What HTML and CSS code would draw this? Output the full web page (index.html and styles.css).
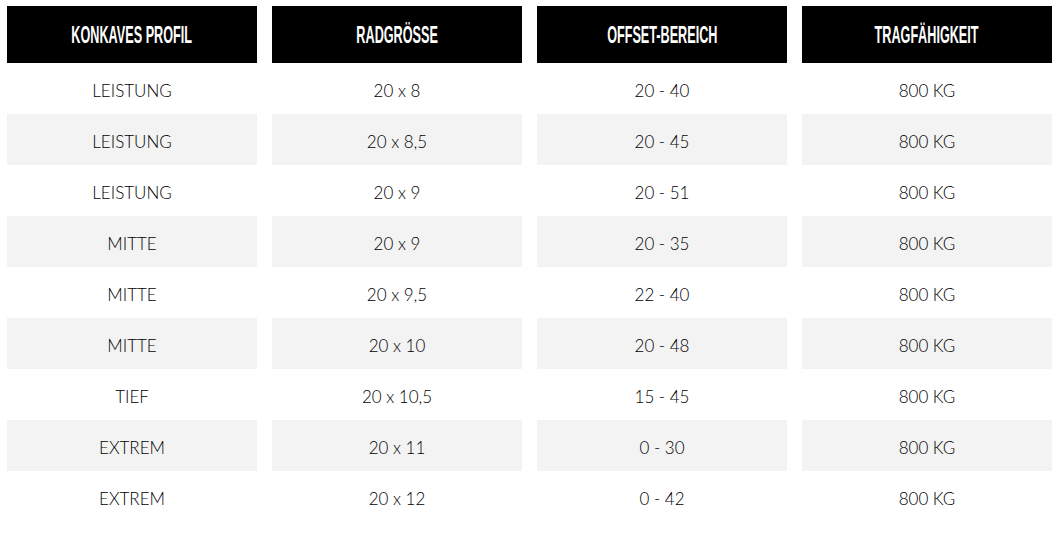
FILE: index.html
```html
<!DOCTYPE html>
<html>
<head>
<meta charset="utf-8">
<link rel="stylesheet" href="styles.css">
</head>
<body>
<div class="table">
  <div class="row head">
    <div class="cell"><span class="ht">KONKAVES PROFIL</span></div>
    <div class="cell"><span class="ht">RADGRÖSSE</span></div>
    <div class="cell"><span class="ht">OFFSET-BEREICH</span></div>
    <div class="cell"><span class="ht">TRAGFÄHIGKEIT</span></div>
  </div>
  <div class="row"><div class="cell">LEISTUNG</div><div class="cell">20 x 8</div><div class="cell">20 - 40</div><div class="cell">800 KG</div></div>
  <div class="row alt"><div class="cell">LEISTUNG</div><div class="cell">20 x 8,5</div><div class="cell">20 - 45</div><div class="cell">800 KG</div></div>
  <div class="row"><div class="cell">LEISTUNG</div><div class="cell">20 x 9</div><div class="cell">20 - 51</div><div class="cell">800 KG</div></div>
  <div class="row alt"><div class="cell">MITTE</div><div class="cell">20 x 9</div><div class="cell">20 - 35</div><div class="cell">800 KG</div></div>
  <div class="row"><div class="cell">MITTE</div><div class="cell">20 x 9,5</div><div class="cell">22 - 40</div><div class="cell">800 KG</div></div>
  <div class="row alt"><div class="cell">MITTE</div><div class="cell">20 x 10</div><div class="cell">20 - 48</div><div class="cell">800 KG</div></div>
  <div class="row"><div class="cell">TIEF</div><div class="cell">20 x 10,5</div><div class="cell">15 - 45</div><div class="cell">800 KG</div></div>
  <div class="row alt"><div class="cell">EXTREM</div><div class="cell">20 x 11</div><div class="cell">0 - 30</div><div class="cell">800 KG</div></div>
  <div class="row"><div class="cell">EXTREM</div><div class="cell">20 x 12</div><div class="cell">0 - 42</div><div class="cell">800 KG</div></div>
</div>
</body>
</html>
```
FILE: styles.css
```css
html, body {
  margin: 0;
  background: #fff;
}
body {
  padding: 6px 5px 0 7px;
  font-family: "Lato", "Liberation Sans", sans-serif;
}
.table {
  display: grid;
  grid-template-columns: repeat(4, 250px);
  column-gap: 15px;
}
.row {
  display: contents;
}
.cell {
  height: 51px;
  box-sizing: border-box;
  padding-top: 4px;
  display: flex;
  align-items: center;
  justify-content: center;
  font-size: 17px;
  font-weight: 300;
  color: #000;
}
.alt .cell {
  background: #f3f3f3;
}
.head .cell {
  height: 57px;
  padding-top: 1px;
  background: #000;
  color: #fff;
}
.ht {
  display: inline-block;
  font-family: "Liberation Sans Narrow", "Liberation Sans", sans-serif;
  font-weight: 700;
  font-size: 23px;
  transform: scaleX(0.55);
  white-space: nowrap;
}
```
